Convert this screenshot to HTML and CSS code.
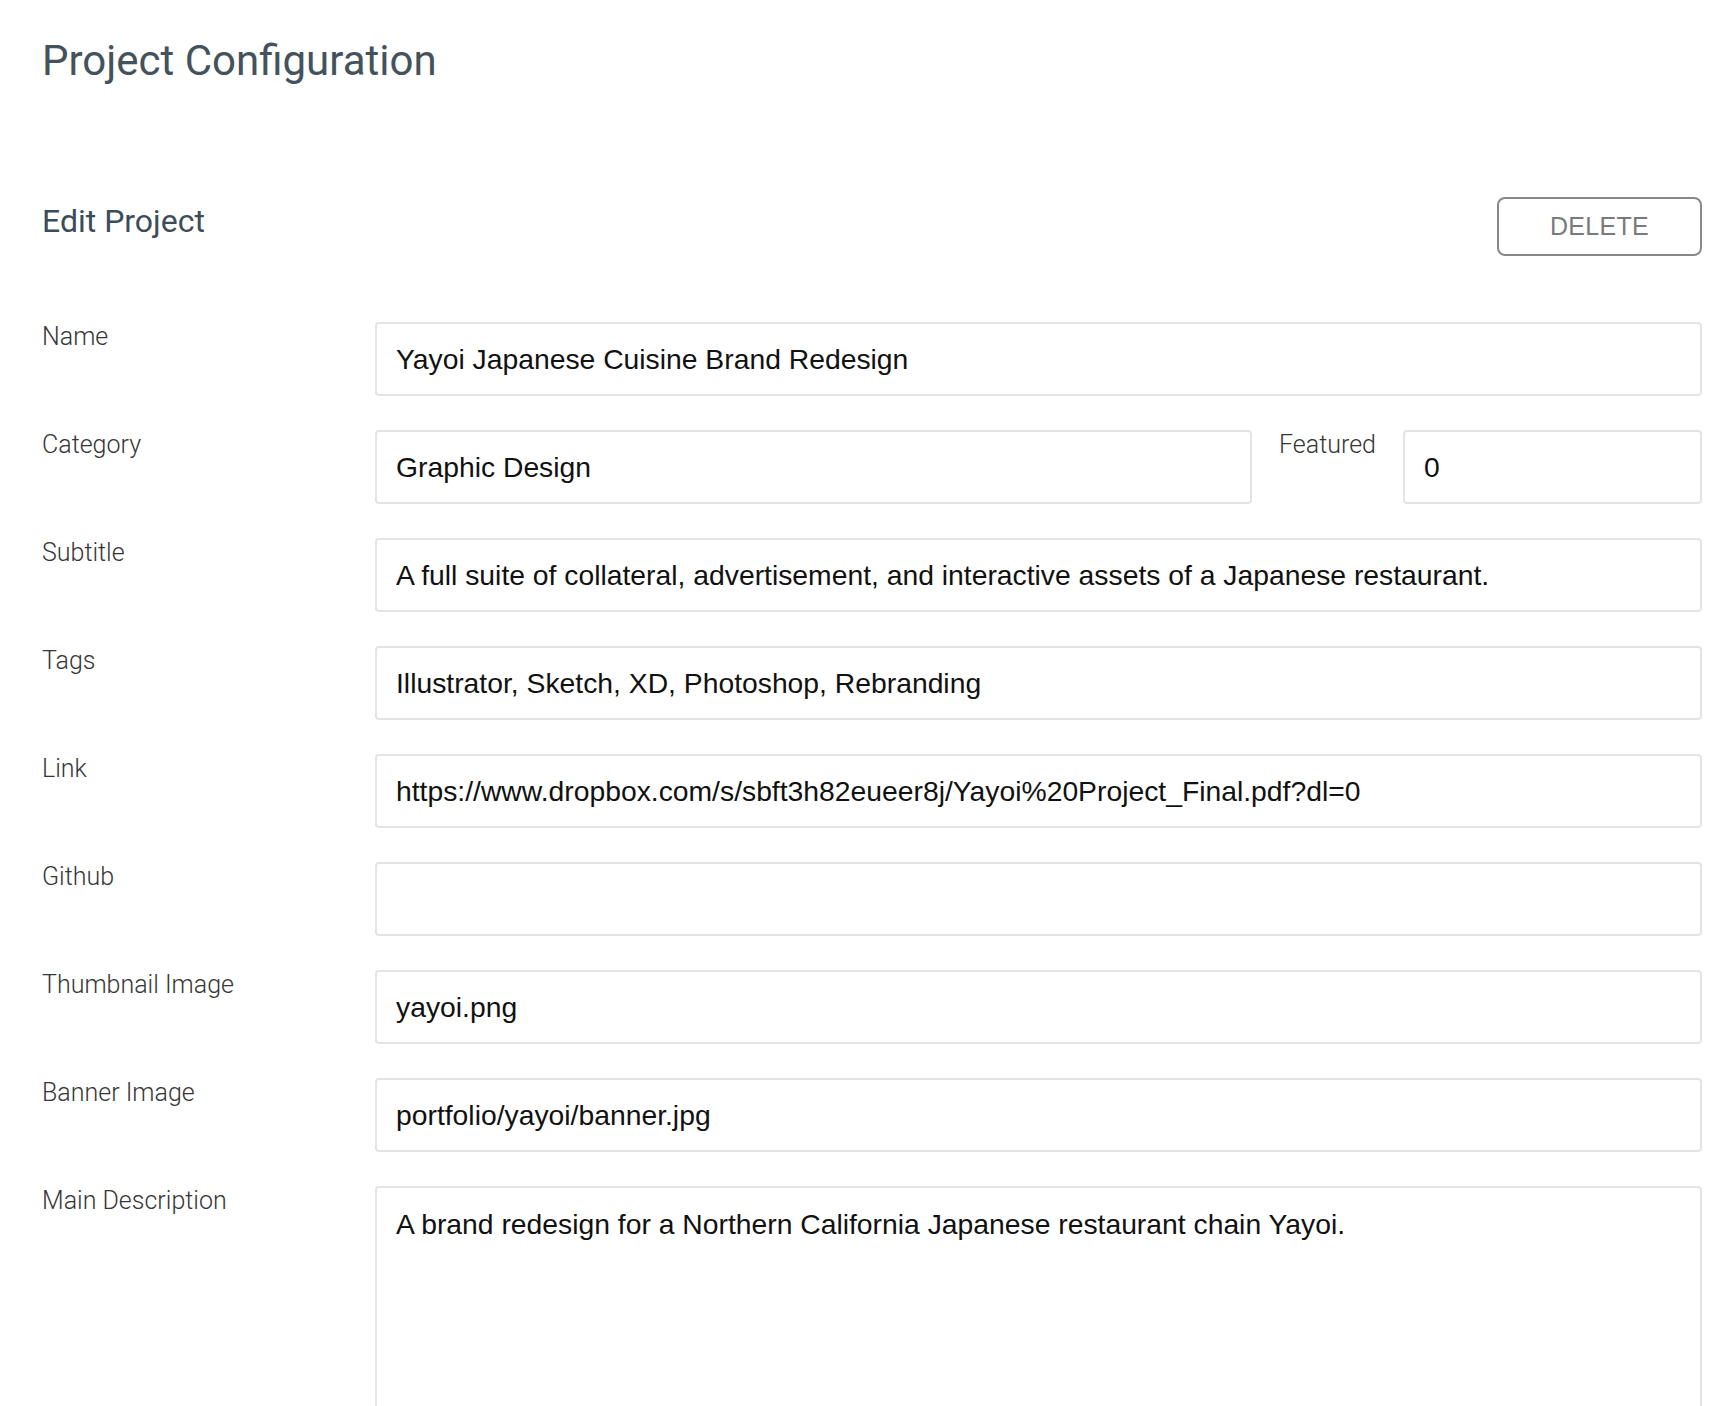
FILE: index.html
```html
<!DOCTYPE html>
<html>
<head>
<meta charset="utf-8">
<link rel="stylesheet" href="styles.css">
</head>
<body>
<div class="page">
  <h1 class="title">Project Configuration</h1>
  <div class="section-head">
    <h2 class="subtitle">Edit Project</h2>
    <button class="btn-delete">DELETE</button>
  </div>
  <form class="form">
    <div class="row">
      <label class="label">Name</label>
      <div class="field"><input class="input" value="Yayoi Japanese Cuisine Brand Redesign"></div>
    </div>
    <div class="row">
      <label class="label">Category</label>
      <div class="field split">
        <input class="input grow" value="Graphic Design">
        <label class="label inline">Featured</label>
        <input class="input small" value="0">
      </div>
    </div>
    <div class="row">
      <label class="label">Subtitle</label>
      <div class="field"><input class="input" value="A full suite of collateral, advertisement, and interactive assets of a Japanese restaurant."></div>
    </div>
    <div class="row">
      <label class="label">Tags</label>
      <div class="field"><input class="input" value="Illustrator, Sketch, XD, Photoshop, Rebranding"></div>
    </div>
    <div class="row">
      <label class="label">Link</label>
      <div class="field"><input class="input" value="https://www.dropbox.com/s/sbft3h82eueer8j/Yayoi%20Project_Final.pdf?dl=0"></div>
    </div>
    <div class="row">
      <label class="label">Github</label>
      <div class="field"><input class="input" value=""></div>
    </div>
    <div class="row">
      <label class="label">Thumbnail Image</label>
      <div class="field"><input class="input" value="yayoi.png"></div>
    </div>
    <div class="row">
      <label class="label">Banner Image</label>
      <div class="field"><input class="input" value="portfolio/yayoi/banner.jpg"></div>
    </div>
    <div class="row">
      <label class="label">Main Description</label>
      <div class="field"><textarea class="input textarea">A brand redesign for a Northern California Japanese restaurant chain Yayoi.</textarea></div>
    </div>
  </form>
</div>
</body>
</html>
```
FILE: styles.css
```css
html, body {
  margin: 0;
  padding: 0;
  background: #ffffff;
}
.page {
  padding: 33px 26px 40px 42px;
  font-family: Roboto, "Liberation Sans", sans-serif;
}
.title {
  margin: 0;
  font-size: 42px;
  font-weight: 400;
  color: #44525c;
  line-height: 56px;
}
.section-head {
  display: flex;
  justify-content: space-between;
  align-items: flex-start;
  margin-top: 112px;
}
.subtitle {
  margin: 0;
  font-size: 32px;
  font-weight: 400;
  color: #3c4d5a;
  line-height: 40px;
}
.btn-delete {
  width: 205px;
  height: 59px;
  border: 2px solid #888888;
  border-radius: 8px;
  background: #ffffff;
  color: #7a7a7a;
  font-family: "Liberation Sans", Arial, sans-serif;
  font-size: 25px;
  letter-spacing: 0.3px;
  margin-top: -4px;
}
.form {
  margin-top: 66px;
  display: flex;
  flex-direction: column;
  gap: 34px;
}
.row {
  display: flex;
  align-items: flex-start;
}
.label {
  width: 333px;
  flex-shrink: 0;
  font-size: 25px;
  font-weight: 300;
  color: #363636;
  line-height: 30px;
}
.label.inline {
  width: auto;
  margin: 0 27px 0 27px;
}
.field {
  flex: 1;
  display: flex;
}
.input {
  box-sizing: border-box;
  width: 100%;
  height: 74px;
  border: 2px solid #e4e4e4;
  border-radius: 4px;
  padding: 0 19px;
  font-family: "Liberation Sans", Arial, sans-serif;
  font-size: 28.3px;
  color: #111111;
  background: #ffffff;
  outline: none;
}
.input.grow {
  flex: 1;
  width: auto;
  min-width: 0;
}
.input.small {
  width: 299px;
  flex-shrink: 0;
}
.textarea {
  height: 320px;
  padding: 18px 19px;
  resize: none;
  line-height: 36px;
}
```
